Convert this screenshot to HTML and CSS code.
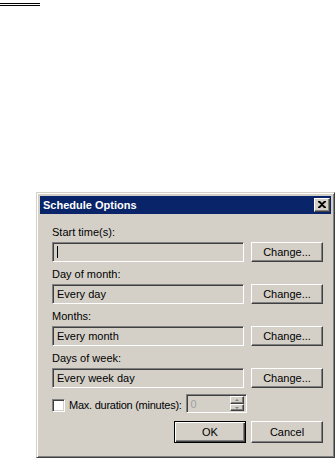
FILE: index.html
```html
<!DOCTYPE html>
<html lang="en">
<head>
    <meta charset="UTF-8">
    <meta name="viewport" content="width=device-width, initial-scale=1.0">
    <title>Schedule Options</title>
    <link rel="stylesheet" href="styles.css">
</head>
<body>

<div class="topline"></div>

<div class="dialog">
    <div class="titlebar">
        <span class="title">Schedule Options</span>
        <span class="close">
            <svg width="8" height="7" viewBox="0 0 8 7">
                <path d="M0 0h2l2 2 2-2h2v1L5 3.5 8 6v1H6L4 5 2 7H0V6l3-2.5L0 1z" fill="#000"/>
            </svg>
        </span>
    </div>

    <div class="client">
        <div class="field">
            <label>Start time(s):</label>
            <div class="row">
                <div class="edit"><span class="caret"></span></div>
                <button class="btn">Change...</button>
            </div>
        </div>

        <div class="field">
            <label>Day of month:</label>
            <div class="row">
                <div class="edit">Every day</div>
                <button class="btn">Change...</button>
            </div>
        </div>

        <div class="field">
            <label>Months:</label>
            <div class="row">
                <div class="edit">Every month</div>
                <button class="btn">Change...</button>
            </div>
        </div>

        <div class="field">
            <label>Days of week:</label>
            <div class="row">
                <div class="edit">Every week day</div>
                <button class="btn">Change...</button>
            </div>
        </div>

        <div class="duration">
            <span class="check"></span>
            <label>Max. duration (minutes):</label>
            <div class="spin">
                <span class="value">0</span>
                <div class="spinbtns">
                    <span class="arrow up"></span>
                    <span class="arrow down"></span>
                </div>
            </div>
        </div>

        <div class="actions">
            <button class="btn default">OK</button>
            <button class="btn">Cancel</button>
        </div>
    </div>
</div>

</body>
</html>
```

FILE: styles.css
```css
body {
    margin: 0;
    background: #ffffff;
    font-family: "Liberation Sans", Arial, sans-serif;
    font-size: 11px;
    color: #000;
}
.topline {
    width: 40px;
    height: 1px;
    margin-top: 3px;
    border-top: 1px solid #000;
    border-bottom: 1px solid #000;
}
.dialog {
    width: 299px;
    height: 266px;
    margin: 186px 0 0 36px;
    box-sizing: border-box;
    background: #d4d0c8;
    border: 1px solid;
    border-color: #d4d0c8 #404040 #404040 #d4d0c8;
    box-shadow: inset 1px 1px #fff, inset -1px -1px #808080;
    padding: 3px;
}
.titlebar {
    height: 18px;
    background: #0a246a;
    display: flex;
    align-items: center;
    justify-content: space-between;
    padding: 0 1px 0 3px;
}
.title {
    color: #fff;
    font-weight: bold;
    font-size: 11px;
}
.close {
    width: 16px;
    height: 14px;
    box-sizing: border-box;
    background: #d4d0c8;
    border: 1px solid;
    border-color: #fff #404040 #404040 #fff;
    box-shadow: inset -1px -1px #808080;
    display: flex;
    align-items: center;
    justify-content: center;
    padding: 0 1px 1px 0;
}
.close svg {
    display: block;
}
.client {
    padding: 12px 0 0 12px;
}
.field {
    margin-bottom: 6px;
}
.field label {
    display: block;
    line-height: 13px;
    margin-bottom: 3px;
}
.row {
    display: flex;
    gap: 7px;
}
.edit {
    width: 192px;
    height: 20px;
    box-sizing: border-box;
    border: 1px solid;
    border-color: #808080 #fff #fff #808080;
    box-shadow: inset 1px 1px #404040, inset -1px -1px #d4d0c8;
    padding: 0 4px;
    display: flex;
    align-items: center;
}
.caret {
    width: 1px;
    height: 12px;
    background: #000;
}
.btn {
    width: 72px;
    height: 20px;
    box-sizing: border-box;
    background: #d4d0c8;
    border: 1px solid;
    border-color: #fff #404040 #404040 #fff;
    box-shadow: inset -1px -1px #808080;
    font-family: inherit;
    font-size: 11px;
    color: #000;
    padding: 0;
}
.duration {
    display: flex;
    align-items: flex-end;
    margin-top: 4px;
    height: 19px;
}
.check {
    width: 13px;
    height: 13px;
    box-sizing: border-box;
    background: #fff;
    border: 1px solid;
    border-color: #808080 #fff #fff #808080;
    box-shadow: inset 1px 1px #404040, inset -1px -1px #d4d0c8;
    margin: 0 4px 1px 0;
}
.duration label {
    line-height: 13px;
    margin: 0 4px 1px 0;
    letter-spacing: -0.25px;
}
.spin {
    width: 61px;
    height: 19px;
    box-sizing: border-box;
    border: 1px solid;
    border-color: #808080 #fff #fff #808080;
    box-shadow: inset 1px 1px #404040, inset -1px -1px #d4d0c8;
    padding: 2px 2px 2px 4px;
    display: flex;
    align-items: center;
    justify-content: space-between;
}
.value {
    color: #a0a0a0;
}
.spinbtns {
    display: flex;
    flex-direction: column;
    width: 14px;
    height: 15px;
}
.arrow {
    flex: 1;
    box-sizing: border-box;
    border: 1px solid;
    border-color: #fff #404040 #404040 #fff;
    box-shadow: inset -1px -1px #808080;
    position: relative;
}
.arrow::after {
    content: "";
    position: absolute;
    left: 4px;
    top: 2px;
    border-left: 2px solid transparent;
    border-right: 2px solid transparent;
}
.up::after {
    border-bottom: 2px solid #808080;
}
.down::after {
    border-top: 2px solid #808080;
}
.actions {
    width: 271px;
    display: flex;
    justify-content: flex-end;
    gap: 5px;
    margin-top: 8px;
}
.actions .btn {
    height: 22px;
}
.btn.default {
    border: 1px solid #000;
    box-shadow: inset 1px 1px #fff, inset -1px -1px #404040, inset -2px -2px #808080;
}
```
